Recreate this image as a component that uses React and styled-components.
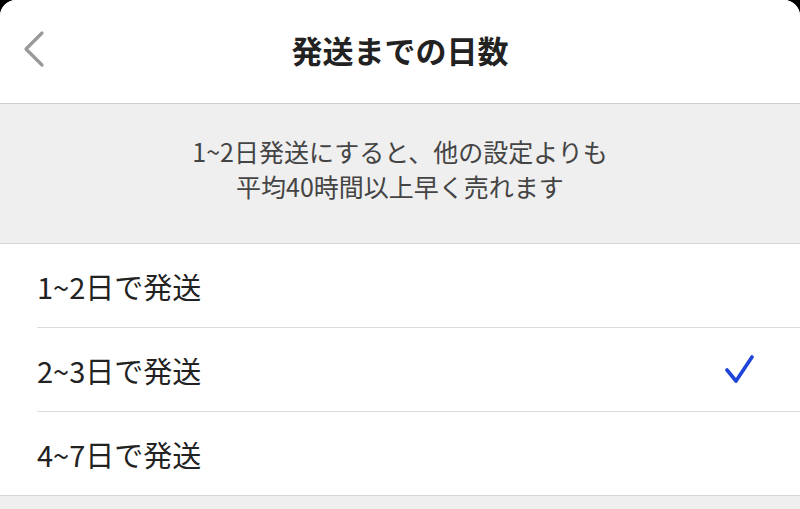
import React from 'react'
import styled, { createGlobalStyle } from 'styled-components'

const GlobalStyle = createGlobalStyle`
        html, body {
                margin: 0;
                padding: 0;
                background-color: #000000;
        }
        body {
                font-family: "Noto Sans CJK JP", "Noto Sans", sans-serif;
        }
`

const Screen = styled.div`
        background-color: #EFEFEF;
        height: 509px;
        border-radius: 16px 16px 0 0;
        overflow: hidden;
        display: flex;
        flex-direction: column;
`

const Header = styled.header`
        background-color: #FFFFFF;
        height: 103px;
        border-bottom: 1px solid #CFCFCF;
        display: grid;
        grid-template-columns: 80px 1fr 80px;
        align-items: center;
`

const BackButton = styled.button`
        background: none;
        border: none;
        padding: 0 0 6px 23px;
        height: 100%;
        display: flex;
        align-items: center;
        cursor: pointer;
`

const Title = styled.h1`
        margin: 0 0 4px;
        font-size: 31px;
        font-weight: 700;
        color: #222222;
        text-align: center;
        line-height: 1;
`

const Notice = styled.div`
        height: 140px;
        box-sizing: border-box;
        padding-top: 30px;
        border-bottom: 1px solid #D6D6D6;
        text-align: center;
        color: #444444;
        font-size: 25px;
        line-height: 35px;
`

const NoticeLine = styled.p`
        margin: 0;
`

const Options = styled.ul`
        list-style: none;
        margin: 0;
        padding: 0 0 0 37px;
        background-color: #FFFFFF;
        border-bottom: 1px solid #D6D6D6;
`

const Option = styled.li`
        height: 83px;
        display: flex;
        align-items: center;
        justify-content: space-between;
        padding-right: 46px;
        font-size: 29px;
        color: #222222;
        border-bottom: ${p => (p.$last ? 'none' : '1px solid #DCDCDC')};
`

const Check = styled.svg`
        width: 30px;
        height: 30px;
        display: ${p => (p.$on ? 'block' : 'none')};
`

const options = ['1~2日で発送', '2~3日で発送', '4~7日で発送']

const App = () => {
    const selected = 1
    return (
        <>
            <GlobalStyle />
            <Screen>
                <Header>
                    <BackButton aria-label="戻る">
                        <svg width="24" height="40" viewBox="0 0 24 40">
                            <polyline points="19,4 3,20 19,36" fill="none" stroke="#9A9A9A" strokeWidth="3.2" strokeLinecap="round" strokeLinejoin="round" />
                        </svg>
                    </BackButton>
                    <Title>発送までの日数</Title>
                    <div />
                </Header>
                <Notice>
                    <NoticeLine>1~2日発送にすると、他の設定よりも</NoticeLine>
                    <NoticeLine>平均40時間以上早く売れます</NoticeLine>
                </Notice>
                <Options>
                    {options.map((label, i) => (
                        <Option key={label} $last={i === options.length - 1}>
                            {label}
                            <Check $on={i === selected} viewBox="0 0 30 30">
                                <polyline points="3,15 12,26 28,2" fill="none" stroke="#1E44D8" strokeWidth="3.6" strokeLinecap="round" strokeLinejoin="round" />
                            </Check>
                        </Option>
                    ))}
                </Options>
            </Screen>
        </>
    )
}

export default App
